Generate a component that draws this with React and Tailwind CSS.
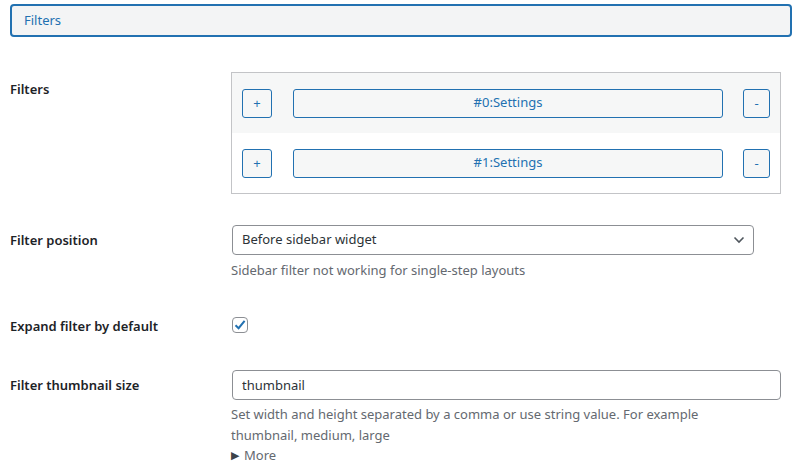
import React, { useState } from "react";

const font = { fontFamily: '"Noto Sans", "Open Sans", sans-serif' };

const Row = ({ label, children, labelClass = "" }) => (
  <div className="flex items-start">
    <div className={`w-[231px] shrink-0 pl-[10px] text-[13px] font-semibold text-[#1d2327] ${labelClass}`}>
      {label}
    </div>
    <div className="flex-1">{children}</div>
  </div>
);

const FilterItem = ({ index, shaded }) => (
  <div className={`flex items-center h-[60px] pl-[10px] pr-[10px] ${shaded ? "bg-[#f6f7f7]" : "bg-white"}`}>
    <button className="w-[30px] h-[29px] rounded-[3px] border border-[#2271b1] bg-[#f6f7f7] text-[#2271b1] text-[13px] leading-none">
      +
    </button>
    <button className="ml-[21px] flex-1 h-[29px] rounded-[3px] border border-[#2271b1] bg-[#f6f7f7] text-[#2271b1] text-[13px]">
      #{index}:Settings
    </button>
    <button className="ml-[20px] w-[27px] h-[29px] rounded-[3px] border border-[#2271b1] bg-[#f6f7f7] text-[#2271b1] text-[13px] leading-none">
      -
    </button>
  </div>
);

export default function App() {
  const [expand, setExpand] = useState(true);
  const [thumb, setThumb] = useState("thumbnail");

  return (
    <div className="w-[799px] h-[468px] overflow-hidden bg-white pt-[4px]" style={font}>
      <div className="pl-[10px] pr-[7px]">
        <button className="w-full h-[33px] rounded-[4px] border-2 border-[#2271b1] bg-[#f3f4f5] text-left pl-[12px] text-[13px] text-[#2271b1]">
          Filters
        </button>
      </div>

      <div className="mt-[35px]">
        <Row label="Filters" labelClass="pt-[7px] leading-[20px]">
          <div className="w-[550px] border border-[#c3c4c7]">
            <FilterItem index={0} shaded />
            <FilterItem index={1} />
          </div>
        </Row>
      </div>

      <div className="mt-[31px]">
        <Row label="Filter position" labelClass="leading-[30px]">
          <div className="relative ml-[1px] w-[522px] h-[30px] rounded-[4px] border border-[#8c8f94] bg-white flex items-center pl-[9px] text-[13px] text-[#2c3338]">
            Before sidebar widget
            <svg className="absolute right-[8px] top-[10px]" width="12" height="8" viewBox="0 0 12 8" fill="none">
              <path d="M1.5 1.5 6 6l4.5-4.5" stroke="#50575e" strokeWidth="1.6" />
            </svg>
          </div>
          <p className="mt-[5px] text-[13px] leading-[20px] text-[#646970]">
            Sidebar filter not working for single-step layouts
          </p>
        </Row>
      </div>

      <div className="mt-[36px]">
        <Row label="Expand filter by default" labelClass="leading-[20px]">
          <button
            onClick={() => setExpand(!expand)}
            className="mt-[1px] ml-[1px] w-[16px] h-[16px] rounded-[4px] border border-[#8c8f94] bg-white flex items-center justify-center"
          >
            {expand && (
              <svg width="14" height="14" viewBox="0 0 14 14" fill="none">
                <path d="M2.5 7.2 5.6 10.2 11.6 2.8" stroke="#2271b1" strokeWidth="2" />
              </svg>
            )}
          </button>
        </Row>
      </div>

      <div className="mt-[34px]">
        <Row label="Filter thumbnail size" labelClass="leading-[30px]">
          <input
            value={thumb}
            onChange={(e) => setThumb(e.target.value)}
            className="ml-[1px] w-[549px] h-[30px] rounded-[4px] border border-[#8c8f94] bg-white pl-[9px] text-[13px] text-[#2c3338] outline-none"
          />
          <p className="mt-[4px] text-[13px] leading-[21px] text-[#646970] w-[520px]">
            Set width and height separated by a comma or use string value. For example thumbnail, medium, large
          </p>
          <div className="flex items-center text-[13px] leading-[18px] text-[#646970]">
            <span className="text-[#3c434a] text-[11px] mr-[5px]">▶</span>
            More
          </div>
        </Row>
      </div>
    </div>
  );
}
